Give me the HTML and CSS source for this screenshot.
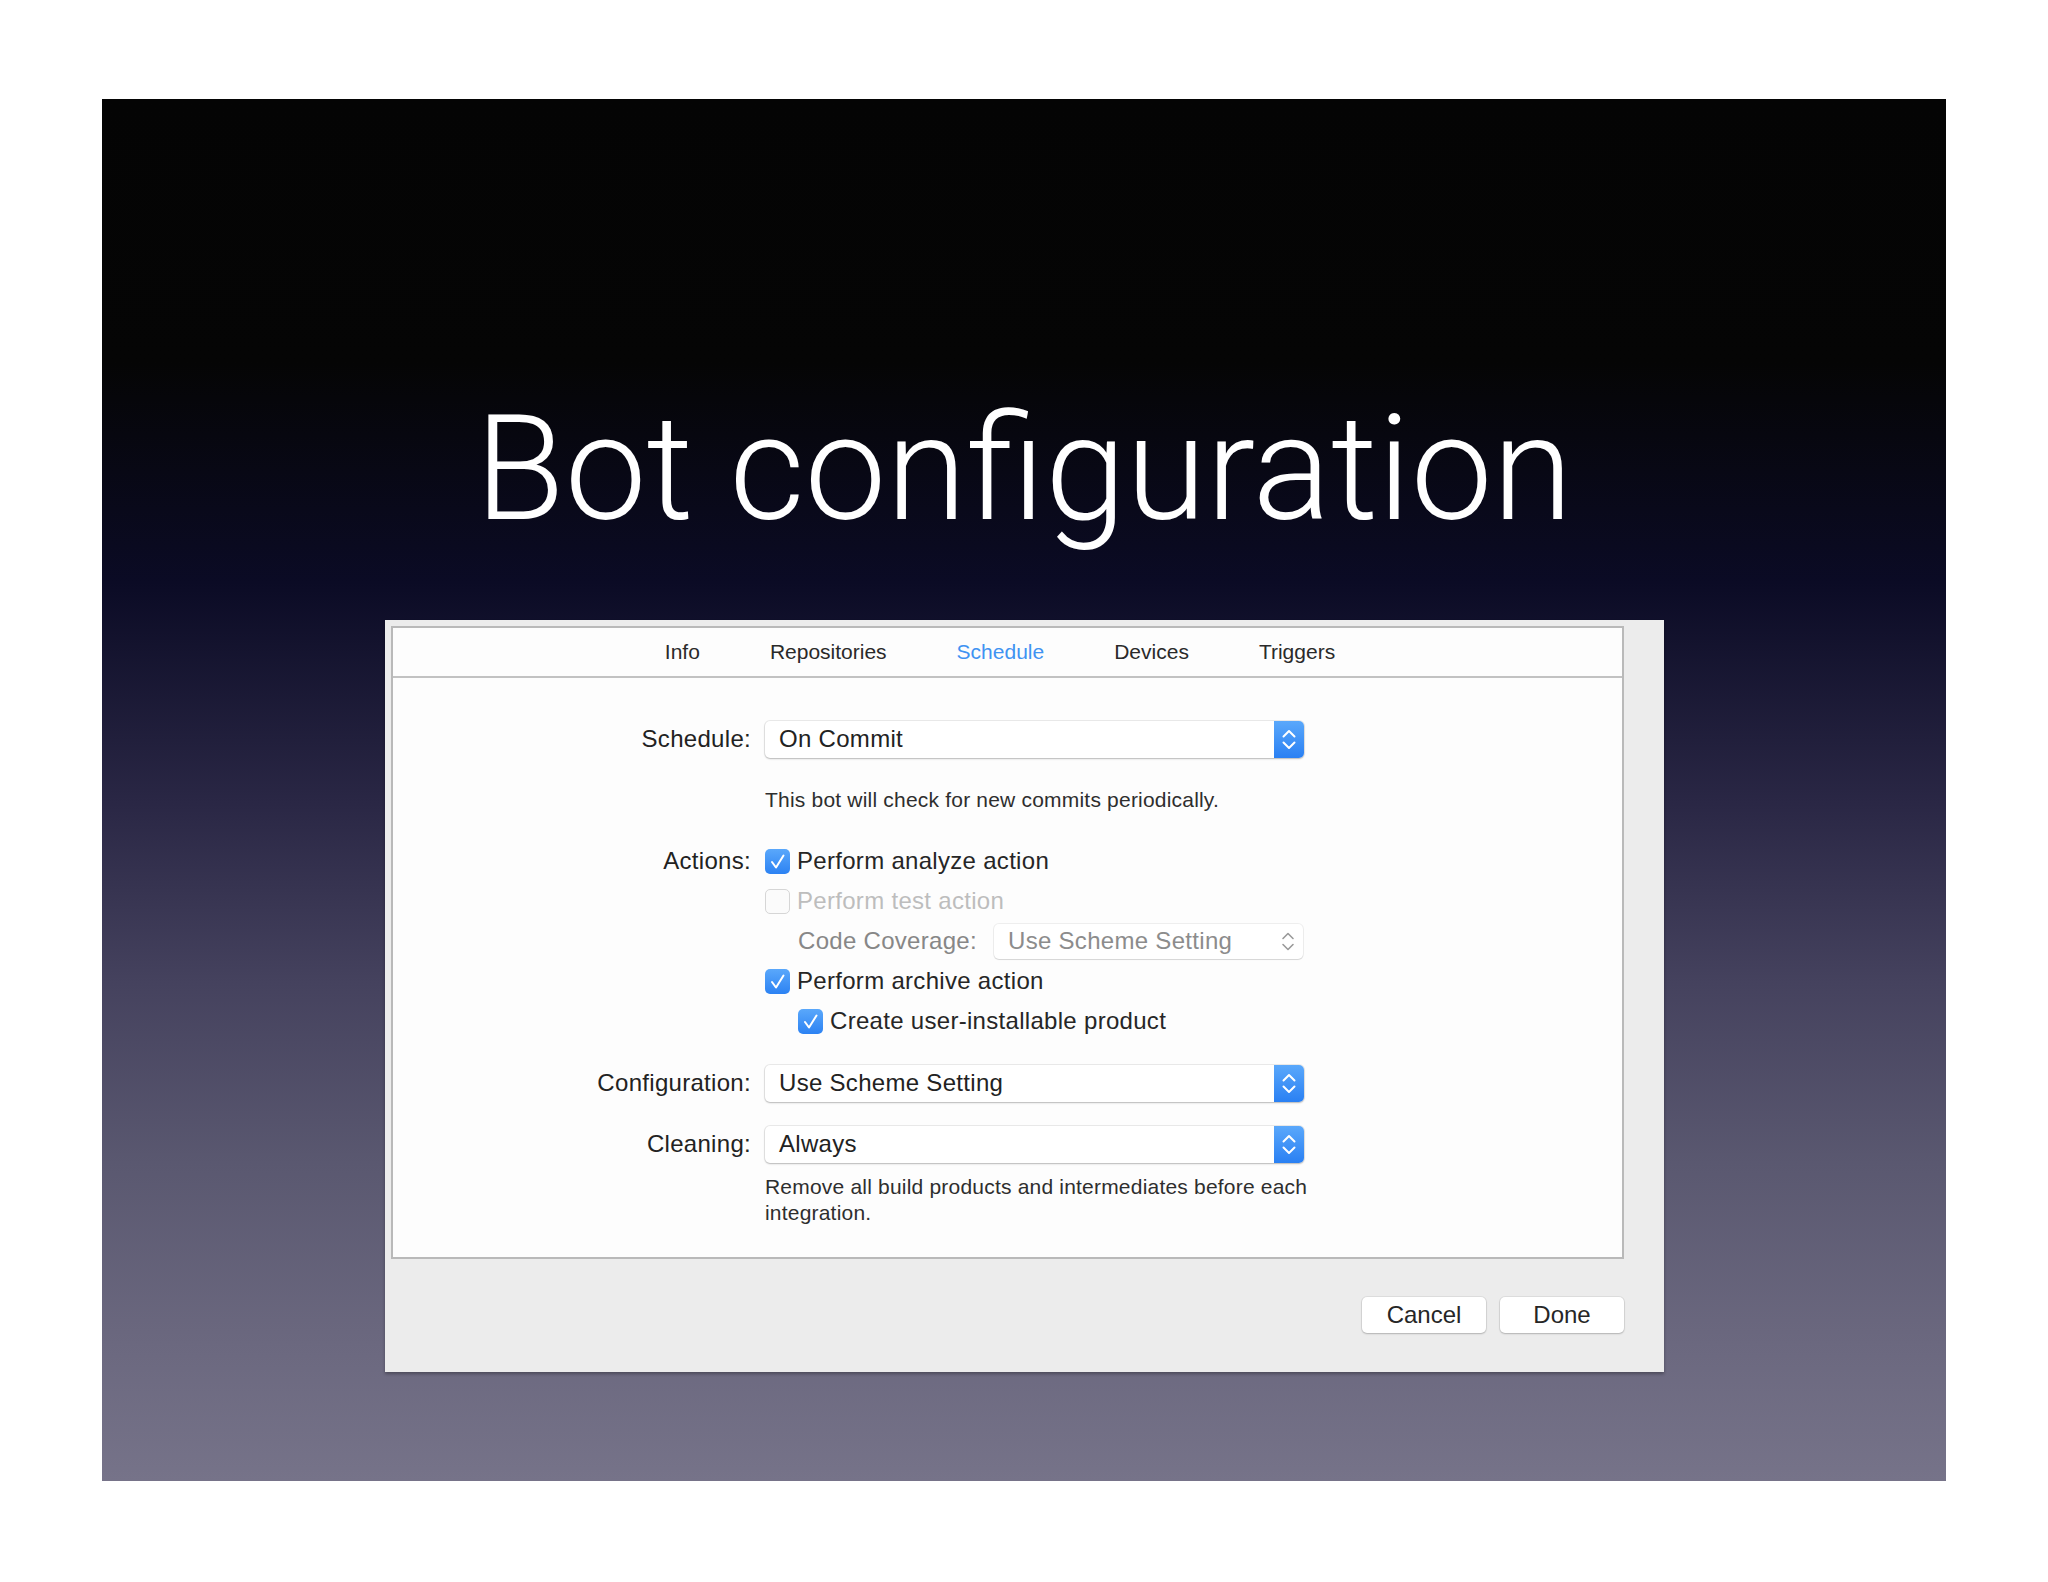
FILE: index.html
```html
<!DOCTYPE html>
<html lang="en">
<head>
    <meta charset="UTF-8">
    <title>Bot configuration</title>
    <link rel="stylesheet" href="styles.css">
</head>
<body>
    <div class="slide">
        <h1 class="title">Bot configuration</h1>

        <div class="dialog">
            <div class="panel">
                <div class="tabs">
                    <span class="tab">Info</span>
                    <span class="tab">Repositories</span>
                    <span class="tab active">Schedule</span>
                    <span class="tab">Devices</span>
                    <span class="tab">Triggers</span>
                </div>

                <div class="form">
                    <div class="row">
                        <div class="label">Schedule:</div>
                        <div class="popup">
                            <span class="popup-value">On Commit</span>
                            <span class="stepper">
                                <svg width="30" height="37" viewBox="0 0 30 37"><path d="M9.5 15.5 L15 10 L20.5 15.5 M9.5 21.5 L15 27 L20.5 21.5" fill="none" stroke="#fff" stroke-width="2" stroke-linecap="round" stroke-linejoin="round"/></svg>
                            </span>
                        </div>
                    </div>
                    <p class="hint">This bot will check for new commits periodically.</p>

                    <div class="row first-check">
                        <div class="label">Actions:</div>
                        <div class="check">
                            <span class="box checked"><svg width="25" height="25" viewBox="0 0 25 25"><path d="M7 13 L11 18.5 L18.5 6.5" fill="none" stroke="#fff" stroke-width="2" stroke-linecap="round" stroke-linejoin="round"/></svg></span>
                            Perform analyze action
                        </div>
                    </div>
                    <div class="row">
                        <div class="label"></div>
                        <div class="check disabled">
                            <span class="box"></span>
                            Perform test action
                        </div>
                    </div>
                    <div class="row">
                        <div class="label"></div>
                        <div class="sub">
                            <span class="sub-label">Code Coverage:</span>
                            <div class="popup small disabled">
                                <span class="popup-value">Use Scheme Setting</span>
                                <span class="stepper">
                                    <svg width="30" height="35" viewBox="0 0 30 35"><path d="M10 14.5 L15 9.5 L20 14.5 M10 20.5 L15 25.5 L20 20.5" fill="none" stroke="#9a9a9a" stroke-width="1.6" stroke-linecap="round" stroke-linejoin="round"/></svg>
                                </span>
                            </div>
                        </div>
                    </div>
                    <div class="row">
                        <div class="label"></div>
                        <div class="check">
                            <span class="box checked"><svg width="25" height="25" viewBox="0 0 25 25"><path d="M7 13 L11 18.5 L18.5 6.5" fill="none" stroke="#fff" stroke-width="2" stroke-linecap="round" stroke-linejoin="round"/></svg></span>
                            Perform archive action
                        </div>
                    </div>
                    <div class="row">
                        <div class="label"></div>
                        <div class="check sub">
                            <span class="box checked"><svg width="25" height="25" viewBox="0 0 25 25"><path d="M7 13 L11 18.5 L18.5 6.5" fill="none" stroke="#fff" stroke-width="2" stroke-linecap="round" stroke-linejoin="round"/></svg></span>
                            Create user-installable product
                        </div>
                    </div>

                    <div class="row config">
                        <div class="label">Configuration:</div>
                        <div class="popup">
                            <span class="popup-value">Use Scheme Setting</span>
                            <span class="stepper">
                                <svg width="30" height="37" viewBox="0 0 30 37"><path d="M9.5 15.5 L15 10 L20.5 15.5 M9.5 21.5 L15 27 L20.5 21.5" fill="none" stroke="#fff" stroke-width="2" stroke-linecap="round" stroke-linejoin="round"/></svg>
                            </span>
                        </div>
                    </div>
                    <div class="row cleaning">
                        <div class="label">Cleaning:</div>
                        <div class="popup">
                            <span class="popup-value">Always</span>
                            <span class="stepper">
                                <svg width="30" height="37" viewBox="0 0 30 37"><path d="M9.5 15.5 L15 10 L20.5 15.5 M9.5 21.5 L15 27 L20.5 21.5" fill="none" stroke="#fff" stroke-width="2" stroke-linecap="round" stroke-linejoin="round"/></svg>
                            </span>
                        </div>
                    </div>
                    <p class="hint wrap">Remove all build products and intermediates before each integration.</p>
                </div>
            </div>

            <div class="buttons">
                <button>Cancel</button>
                <button>Done</button>
            </div>
        </div>
    </div>
</body>
</html>
```

FILE: styles.css
```css
body {
    margin: 0;
    background: #fff;
    font-family: "Liberation Sans", Arial, sans-serif;
    color: #262626;
}

.slide {
    width: 1844px;
    height: 1382px;
    margin: 99px 0 0 102px;
    overflow: hidden;
    background: linear-gradient(180deg,
        #040404 0%,
        #050505 19%,
        #0b0b25 35%,
        #2a2745 51%,
        #45425e 64%,
        #5a5870 77%,
        #6b687f 90%,
        #767389 100%);
}

.title {
    margin: 0;
    padding-top: 298px;
    font-family: Roboto, "Liberation Sans", sans-serif;
    font-weight: 300;
    font-size: 146px;
    line-height: 146px;
    color: #fff;
    text-align: center;
}

.dialog {
    width: 1279px;
    height: 752px;
    box-sizing: border-box;
    margin: 77px 0 0 283px;
    padding: 6px 40px 0 6px;
    background: #ececec;
    box-shadow: 0 2px 3px rgba(0, 0, 0, 0.3);
}

.panel {
    height: 633px;
    box-sizing: border-box;
    background: #fdfdfd;
    border: 2px solid #b9b9b9;
}

.tabs {
    height: 48px;
    display: flex;
    align-items: center;
    justify-content: center;
    gap: 70px;
    padding-right: 15px;
    border-bottom: 2px solid #c2c2c2;
    font-size: 21px;
    color: #2a2a2a;
}

.tab.active {
    color: #3f93f2;
}

.form {
    padding-top: 41px;
    font-size: 24px;
    letter-spacing: 0.3px;
}

.row {
    display: flex;
    align-items: center;
    min-height: 40px;
}

.row.first-check {
    margin-top: 29px;
}

.row.config {
    margin-top: 22px;
}

.row.cleaning {
    margin-top: 21px;
}

.label {
    width: 372px;
    flex-shrink: 0;
    box-sizing: border-box;
    padding-right: 14px;
    text-align: right;
    color: #222;
}

.popup {
    width: 539px;
    height: 37px;
    display: flex;
    align-items: center;
    justify-content: space-between;
    background: #fff;
    border-radius: 5px;
    box-shadow: 0 0 0 1px rgba(0, 0, 0, 0.07), 0 1px 2px rgba(0, 0, 0, 0.22);
    color: #222;
}

.popup-value {
    padding-left: 14px;
}

.stepper {
    width: 30px;
    height: 37px;
    display: flex;
    border-radius: 0 5px 5px 0;
    background: linear-gradient(180deg, #5aa8fb 0%, #2a80f3 100%);
}

.popup.small {
    width: 309px;
    height: 35px;
}

.popup.disabled {
    box-shadow: 0 0 0 1px rgba(0, 0, 0, 0.06), 0 1px 1px rgba(0, 0, 0, 0.1);
    color: #8c8c8c;
}

.popup.disabled .stepper {
    height: 35px;
    background: none;
}

.hint {
    margin: 29px 0 0 372px;
    font-size: 21px;
    line-height: 24px;
    letter-spacing: 0.2px;
    color: #2e2e2e;
}

.hint.wrap {
    margin-top: 10px;
    max-width: 560px;
    line-height: 26px;
}

.check {
    display: flex;
    align-items: center;
    gap: 7px;
}

.check.disabled {
    color: #bdbdbd;
}

.sub {
    display: flex;
    align-items: center;
    margin-left: 33px;
}

.sub-label {
    width: 196px;
    color: #878787;
}

.box {
    width: 25px;
    height: 25px;
    box-sizing: border-box;
    display: flex;
    border-radius: 5px;
    border: 1px solid #d6d6d6;
    background: #fbfbfb;
}

.box.checked {
    border: none;
    background: linear-gradient(180deg, #5aa8fb 0%, #2c82f3 100%);
}

.buttons {
    display: flex;
    justify-content: flex-end;
    gap: 14px;
    margin-top: 38px;
}

button {
    width: 124px;
    height: 36px;
    border: none;
    border-radius: 5px;
    background: #fff;
    box-shadow: 0 0 0 1px rgba(0, 0, 0, 0.06), 0 1px 2px rgba(0, 0, 0, 0.2);
    font-family: "Liberation Sans", Arial, sans-serif;
    font-size: 24px;
    color: #262626;
}
```
